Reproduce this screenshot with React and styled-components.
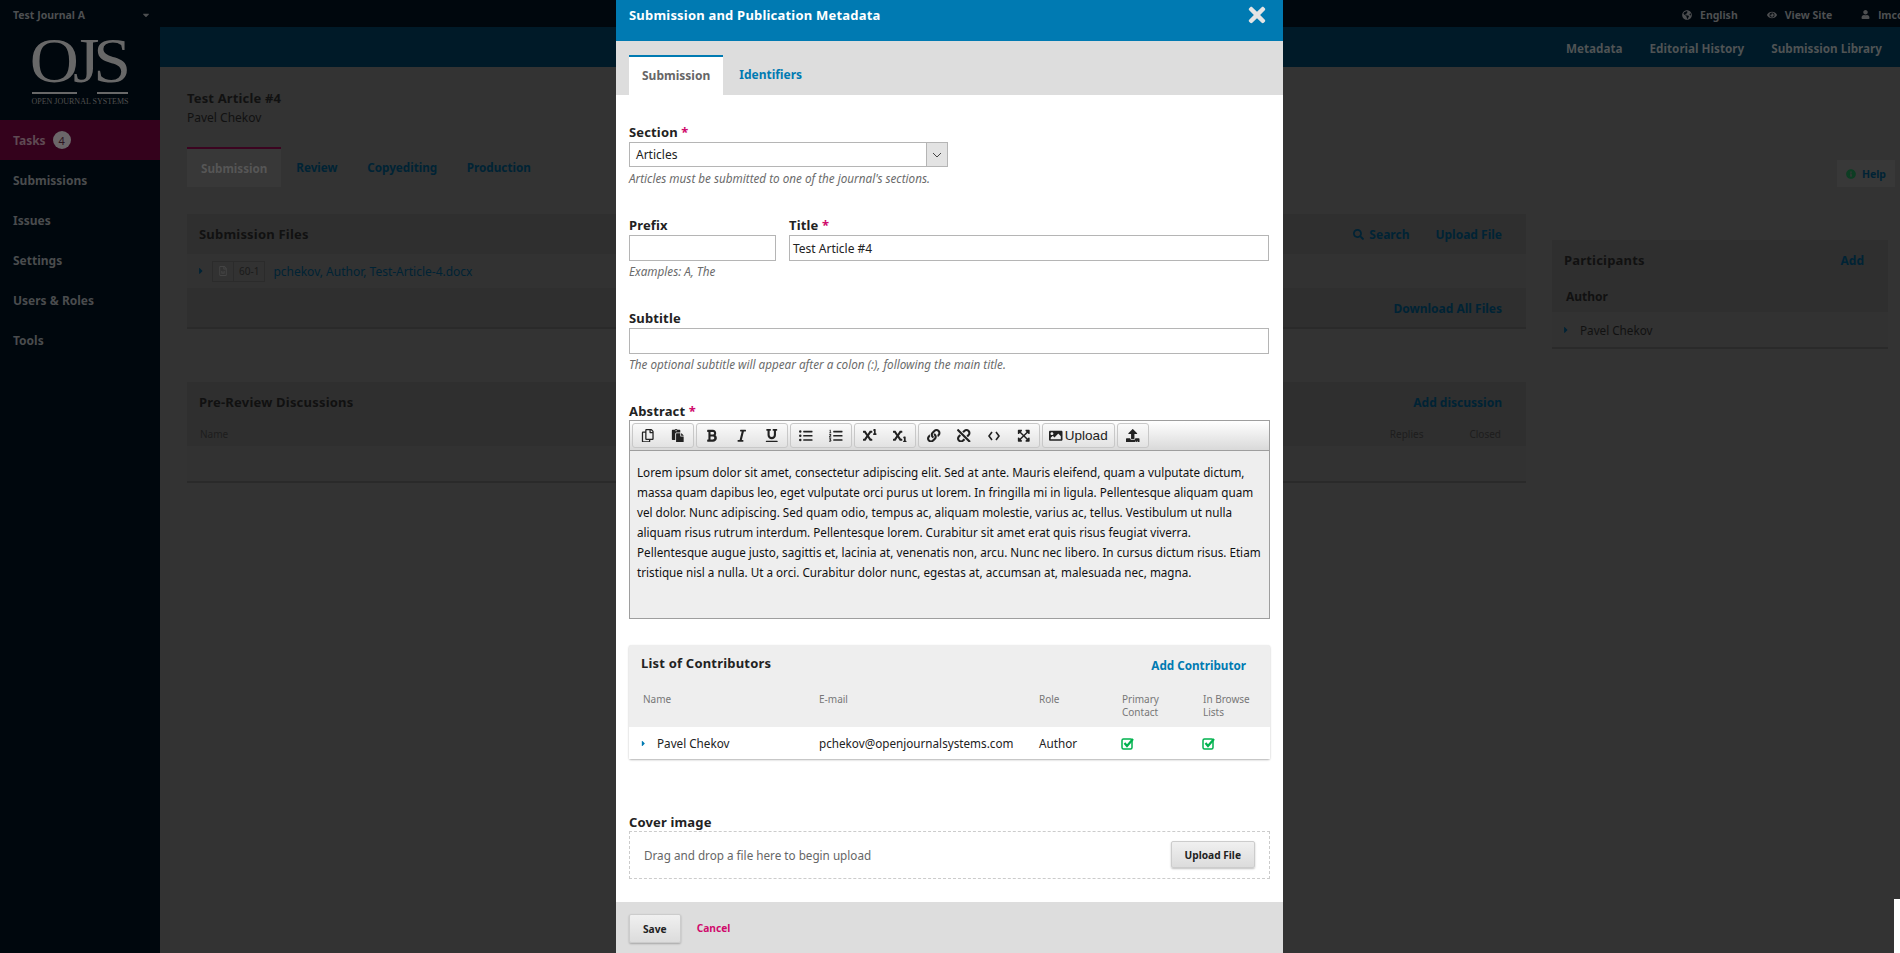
import React from 'react';
import styled, { createGlobalStyle } from 'styled-components';
import {
  FaBold, FaCaretDown, FaCaretRight, FaExpandArrowsAlt, FaEye, FaGlobeAmericas, FaImage, FaInfoCircle,
  FaItalic, FaLink, FaListOl, FaListUl, FaPaste, FaRegCopy, FaRegFileWord, FaSearch,
  FaSubscript, FaSuperscript, FaTimes, FaUnderline, FaUnlink, FaUpload, FaUser,
} from 'react-icons/fa';

const dimLink = '#002335';
const blue = '#007ab2';

const Global = createGlobalStyle`
  html, body { margin: 0; height: 100%; background: #333; overflow: hidden; }
  body { font-family: "Noto Sans", sans-serif; font-size: 13px; color: #111; }
  * { box-sizing: border-box; }
`;

const Screen = styled.div`
  position: relative;
  width: 1900px;
  height: 953px;
  overflow: hidden;
  background: #333;
`;

const TopBar = styled.div`
  height: 27px;
  background: #00070d;
  display: flex;
  align-items: center;
  justify-content: space-between;
  padding: 2px 0 0 13px;
  color: #4d4f51;
  font-size: 10.5px;
  font-weight: 700;
`;

const JournalName = styled.div`
  width: 138px;
  display: flex;
  align-items: center;
  justify-content: space-between;
`;

const TopLinks = styled.div`
  display: flex;
  gap: 29px;
  width: 218px;
  white-space: nowrap;
  overflow: hidden;
`;

const TopLink = styled.span`
  display: flex;
  align-items: center;
  gap: 8px;
`;

const Body = styled.div`
  display: flex;
  height: 926px;
`;

const Sidebar = styled.nav`
  width: 160px;
  flex: none;
  background: #00070d;
`;

const Logo = styled.div`
  height: 93px;
  display: flex;
  flex-direction: column;
  align-items: center;
  color: #686868;
  font-family: "Liberation Serif", serif;
  padding-top: 5px;
`;

const LogoMark = styled.div`
  font-size: 68px;
  line-height: 56px;
  letter-spacing: -6px;
  margin-left: -5px;
  transform: scaleY(.94);
`;

const LogoRule = styled.div`
  width: 96px;
  height: 2px;
  margin-top: 4px;
  background: linear-gradient(90deg, #686868 47%, transparent 47%, transparent 68%, #686868 68%);
`;

const LogoCaption = styled.div`
  font-size: 8px;
  line-height: 12px;
  margin-top: 2px;
  white-space: nowrap;
  color: #505050;
`;

const NavItem = styled.div`
  height: 40px;
  padding-left: 13px;
  display: flex;
  align-items: center;
  gap: 7px;
  font-size: 12px;
  font-weight: 700;
  color: ${p => (p.$active ? '#5f4a53' : '#4a4c4e')};
  background: ${p => (p.$active ? '#34021c' : 'transparent')};
`;

const Count = styled.span`
  width: 18px;
  height: 18px;
  border-radius: 50%;
  background: #6b6669;
  color: #2c1520;
  display: flex;
  align-items: center;
  justify-content: center;
  font-size: 11px;
  font-weight: 400;
`;

const Main = styled.div`
  flex: 1;
  min-width: 0;
`;

const ContextBar = styled.div`
  height: 40px;
  padding: 1px 18px 0 0;
  background: #001a28;
  display: flex;
  align-items: center;
  justify-content: flex-end;
  gap: 27px;
  color: #4f5354;
  font-size: 11.7px;
  font-weight: 700;
`;

const Heading = styled.div`
  padding: 21px 0 0 27px;
  line-height: 20px;
`;

const ArticleTitle = styled.div`
  font-weight: 700;
  color: #111;
  letter-spacing: .15px;
`;

const ArticleAuthor = styled.div`
  font-size: 12px;
  color: #111;
`;

const TabRow = styled.div`
  margin-top: 19px;
  height: 40px;
  padding: 0 5px 0 27px;
  display: flex;
  align-items: stretch;
  justify-content: space-between;
`;

const TabList = styled.div`
  display: flex;
`;

const PageTab = styled.div`
  padding: 0 14.8px;
  display: flex;
  align-items: center;
  font-size: 11.7px;
  font-weight: 700;
  color: ${p => (p.$active ? '#565656' : dimLink)};
  ${p => p.$active && `
    background: #383838;
    border-top: 2px solid #3b0420;
    padding: 0 14px;
  `}
`;

const HelpTab = styled.div`
  align-self: flex-end;
  height: 27px;
  padding: 0 9px;
  background: #383838;
  display: flex;
  align-items: center;
  gap: 6px;
  color: ${dimLink};
  font-size: 10.5px;
  font-weight: 700;
  svg { color: #0d3d23; }
`;

const Columns = styled.div`
  display: flex;
  gap: 26px;
  padding-left: 27px;
`;

const LeftColumn = styled.div`
  width: 1339px;
  padding-top: 27px;
  display: flex;
  flex-direction: column;
  gap: 53px;
`;

const RightColumn = styled.div`
  width: 336px;
  padding-top: 53px;
`;

const Panel = styled.section`
  background: #2f2f2f;
  border-bottom: 2px solid #2a2a2a;
`;

const PanelHead = styled.div`
  display: flex;
  align-items: center;
  justify-content: space-between;
  padding: 0 24px 0 12px;
  height: 40px;
`;

const PanelTitle = styled.h3`
  margin: 0;
  font-size: 13px;
  font-weight: 700;
  color: #111;
  letter-spacing: .2px;
`;

const PanelActions = styled.div`
  display: flex;
  gap: 26px;
`;

const DimLink = styled.span`
  display: flex;
  align-items: center;
  gap: 5px;
  color: ${dimLink};
  font-weight: 700;
  font-size: 12px;
`;

const FileRow = styled.div`
  height: 34px;
  padding-left: 9px;
  background: #323232;
  display: flex;
  align-items: center;
  gap: 6px;
  color: ${dimLink};
  font-size: 12px;
`;

const FileBadge = styled.div`
  display: flex;
  align-items: stretch;
  height: 21px;
  margin-right: 2px;
  border: 1px solid #2b2b2b;
  font-size: 10px;
  span {
    display: flex;
    align-items: center;
    padding: 0 5px;
    color: #444;
  }
  span + span { border-left: 1px solid #2b2b2b; color: #1a1a1a; }
`;

const PanelFoot = styled.div`
  height: 37px;
  margin-top: 2px;
  display: flex;
  align-items: center;
  justify-content: flex-end;
  padding-right: 24px;
`;

const ColumnHeads = styled.div`
  height: 24px;
  display: flex;
  align-items: center;
  justify-content: space-between;
  padding: 0 25px 0 13px;
  color: #1d1d1d;
  font-size: 10px;
  div { display: flex; gap: 46px; }
`;

const EmptyRow = styled.div`
  height: 35px;
  background: #323232;
`;

const RoleHead = styled.div`
  height: 32px;
  padding: 1px 0 0 14px;
  display: flex;
  align-items: center;
  font-size: 12px;
  font-weight: 700;
  color: #111;
`;

const PersonRow = styled.div`
  height: 35px;
  padding-left: 9px;
  background: #323232;
  display: flex;
  align-items: center;
  gap: 9px;
  font-size: 11.7px;
  color: #111;
  svg { color: ${dimLink}; }
`;

const Modal = styled.div`
  position: absolute;
  top: 0;
  left: 616px;
  width: 667px;
  height: 953px;
  background: #fff;
  display: flex;
  flex-direction: column;
  overflow: hidden;
`;

const ModalHead = styled.header`
  flex: none;
  height: 41px;
  padding: 0 13px 11px;
  background: ${blue};
  color: #fff;
  display: flex;
  align-items: center;
  justify-content: space-between;
  font-size: 13px;
  font-weight: 700;
  letter-spacing: .2px;
  svg { color: #e4e4e4; margin-right: 1px; }
`;

const ModalTabs = styled.div`
  flex: none;
  height: 54px;
  background: #ddd;
  padding: 14px 13px 0;
  display: flex;
`;

const ModalTab = styled.div`
  padding: 0 ${p => (p.$active ? 13 : 16)}px 2px;
  display: flex;
  align-items: center;
  font-size: 12px;
  font-weight: 700;
  color: ${p => (p.$active ? '#666' : blue)};
  ${p => p.$active && `background: #fff; border-top: 2px solid ${blue};`}
`;

const Form = styled.div`
  flex: 1;
  min-height: 0;
  padding: 27px 13px 0;
`;

const Field = styled.div`
  margin-bottom: ${p => p.$gap ?? 27}px;
`;

const SplitFields = styled.div`
  display: grid;
  grid-template-columns: 147px 1fr;
  gap: 13px;
  margin-bottom: 27px;
`;

const Label = styled.div`
  height: 20px;
  line-height: 20px;
  font-size: 13px;
  font-weight: 700;
  color: #222;
  letter-spacing: .15px;
`;

const Star = styled.span`
  color: #d00a6c;
`;

const Input = styled.div`
  height: 26px;
  margin-right: ${p => (p.$inset ? 1 : 0)}px;
  border: 1px solid #b5b5b5;
  padding: 0 3px;
  display: flex;
  align-items: center;
  font-size: 12px;
  color: #222;
`;

const Select = styled.div`
  width: 319px;
  height: 25px;
  margin-bottom: 1px;
  border: 1px solid #b5b5b5;
  display: flex;
  align-items: center;
  justify-content: space-between;
  padding-left: 6px;
  font-size: 12px;
  color: #222;
`;

const SelectArrow = styled.div`
  width: 21px;
  height: 23px;
  background: #e3e3e3;
  border-left: 1px solid #b5b5b5;
  display: flex;
  align-items: center;
  justify-content: center;
`;

const Hint = styled.div`
  height: 20px;
  line-height: 20px;
  font-size: 11.7px;
  font-style: italic;
  color: #6b6b6b;
`;

const Editor = styled.div`
  margin-top: -1px;
  border: 1px solid #9e9e9e;
  height: 199px;
  display: flex;
  flex-direction: column;
`;

const Toolbar = styled.div`
  flex: none;
  height: 30px;
  padding: 2px 0 0 2px;
  display: flex;
  gap: 2px;
  background: linear-gradient(#fff, #d9d9d9);
  border-bottom: 1px solid #9e9e9e;
`;

const ToolGroup = styled.div`
  height: 25px;
  display: flex;
  border: 1px solid #c8c8c8;
  border-radius: 3px;
  background: linear-gradient(#fafafa, #e2e2e2);
`;

const ToolButton = styled.div`
  width: ${p => (p.$wide ? 71 : 30)}px;
  display: flex;
  align-items: center;
  justify-content: center;
  gap: 2px;
  font-family: "Liberation Sans", sans-serif;
  font-size: 13.5px;
  color: #222;
`;

const EditorText = styled.div`
  flex: 1;
  background: #eee;
  padding: 11px 7px 0;
  font-size: 11.7px;
  line-height: 20px;
  color: #111;
`;

const Contributors = styled.section`
  margin: 26px 0 53px;
  border-radius: 2px;
  box-shadow: 0 1px 2px rgba(0, 0, 0, .3);
  background: #eee;
`;

const ContributorsHead = styled.div`
  height: 42px;
  padding: 0 24px 2px 12px;
  display: flex;
  align-items: center;
  justify-content: space-between;
`;

const ContributorsTitle = styled.h3`
  margin: 0 0 4px;
  font-size: 13px;
  font-weight: 700;
  color: #222;
  letter-spacing: .2px;
`;

const AddLink = styled.span`
  font-size: 11.7px;
  font-weight: 700;
  color: ${blue};
`;

const ContribColumns = styled.div`
  display: grid;
  grid-template-columns: 176px 220px 83px 81px 1fr;
  height: 40px;
  padding: 6px 0 0 14px;
  font-size: 10px;
  line-height: 13px;
  color: #777;
`;

const ContribRow = styled.div`
  display: grid;
  grid-template-columns: 180px 220px 82px 81px 1fr;
  align-items: center;
  height: 32px;
  padding-left: 10px;
  background: #fff;
  font-size: 11.7px;
  color: #222;
`;

const ContribName = styled.div`
  display: flex;
  align-items: center;
  gap: 9px;
  svg { color: ${blue}; }
`;

const CheckMark = () => (
  <svg width="14" height="13" viewBox="0 0 14 13" fill="none">
    <rect x="1" y="2" width="10" height="10" rx="1.5" stroke="#00b24e" strokeWidth="1.5" />
    <path d="M3.5 6l2.5 3L12 2" stroke="#00b24e" strokeWidth="2.2" />
  </svg>
);

const CheckCell = styled.div`
  display: flex;
`;

const DropZone = styled.div`
  height: 48px;
  margin-top: -1px;
  border: 1px dashed #ccc;
  display: flex;
  align-items: center;
  justify-content: space-between;
  padding: 0 14px 1px 14px;
  font-size: 11.7px;
  color: #666;
`;

const Button = styled.div`
  height: ${p => p.$h}px;
  padding: 0 ${p => p.$pad}px;
  display: flex;
  align-items: center;
  border: 1px solid #ccc;
  border-radius: 2px;
  background: linear-gradient(#f0f0f0, #dcdcdc);
  box-shadow: 0 1px 2px rgba(0, 0, 0, .25);
  font-size: 10.2px;
  font-weight: 700;
  color: #222;
`;

const ModalFoot = styled.footer`
  flex: none;
  height: 51px;
  padding: 12px 13px 0;
  background: #ddd;
  display: flex;
  align-items: flex-start;
  gap: 16px;
`;

const CancelLink = styled.span`
  line-height: 29px;
  font-size: 10.2px;
  font-weight: 700;
  color: #d00a6c;
`;

const CornerGap = styled.div`
  position: absolute;
  right: 0;
  top: 899px;
  width: 6px;
  height: 54px;
  background: #fff;
`;

const toolGroups = [
  [<FaRegCopy />, <FaPaste />],
  [<FaBold />, <FaItalic />, <FaUnderline />],
  [<FaListUl />, <FaListOl />],
  [<FaSuperscript />, <FaSubscript />],
  [
    <FaLink />,
    <FaUnlink />,
    <svg width="12" height="10" viewBox="0 0 12 10" fill="none" stroke="#222" strokeWidth="1.6">
      <path d="M4 1 1 5l3 4M8 1l3 4-3 4" />
    </svg>,
    <FaExpandArrowsAlt />,
  ],
];

const abstract = 'Lorem ipsum dolor sit amet, consectetur adipiscing elit. Sed at ante. Mauris eleifend, quam a vulputate dictum, massa quam dapibus leo, eget vulputate orci purus ut lorem. In fringilla mi in ligula. Pellentesque aliquam quam vel dolor. Nunc adipiscing. Sed quam odio, tempus ac, aliquam molestie, varius ac, tellus. Vestibulum ut nulla aliquam risus rutrum interdum. Pellentesque lorem. Curabitur sit amet erat quis risus feugiat viverra. Pellentesque augue justo, sagittis et, lacinia at, venenatis non, arcu. Nunc nec libero. In cursus dictum risus. Etiam tristique nisl a nulla. Ut a orci. Curabitur dolor nunc, egestas at, accumsan at, malesuada nec, magna.';

const App = () => (
  <Screen>
    <Global />
    <TopBar>
      <JournalName>Test Journal A <FaCaretDown size={10} /></JournalName>
      <TopLinks>
        <TopLink><FaGlobeAmericas size={10} /> English</TopLink>
        <TopLink><FaEye size={10} /> View Site</TopLink>
        <TopLink><FaUser size={9} /> lmccoy</TopLink>
      </TopLinks>
    </TopBar>
    <Body>
      <Sidebar>
        <Logo>
          <LogoMark>OJS</LogoMark>
          <LogoRule />
          <LogoCaption>OPEN JOURNAL SYSTEMS</LogoCaption>
        </Logo>
        <NavItem $active>Tasks <Count>4</Count></NavItem>
        <NavItem>Submissions</NavItem>
        <NavItem>Issues</NavItem>
        <NavItem>Settings</NavItem>
        <NavItem>Users &amp; Roles</NavItem>
        <NavItem>Tools</NavItem>
      </Sidebar>
      <Main>
        <ContextBar>
          <span>Metadata</span>
          <span>Editorial History</span>
          <span>Submission Library</span>
        </ContextBar>
        <Heading>
          <ArticleTitle>Test Article #4</ArticleTitle>
          <ArticleAuthor>Pavel Chekov</ArticleAuthor>
        </Heading>
        <TabRow>
          <TabList>
            <PageTab $active>Submission</PageTab>
            <PageTab>Review</PageTab>
            <PageTab>Copyediting</PageTab>
            <PageTab>Production</PageTab>
          </TabList>
          <HelpTab><FaInfoCircle size={10} /> Help</HelpTab>
        </TabRow>
        <Columns>
          <LeftColumn>
            <Panel>
              <PanelHead>
                <PanelTitle>Submission Files</PanelTitle>
                <PanelActions>
                  <DimLink><FaSearch size={11} /> Search</DimLink>
                  <DimLink>Upload File</DimLink>
                </PanelActions>
              </PanelHead>
              <FileRow>
                <FaCaretRight size={10} />
                <FileBadge>
                  <span><FaRegFileWord size={10} /></span>
                  <span>60-1</span>
                </FileBadge>
                pchekov, Author, Test-Article-4.docx
              </FileRow>
              <PanelFoot><DimLink>Download All Files</DimLink></PanelFoot>
            </Panel>
            <Panel>
              <PanelHead>
                <PanelTitle>Pre-Review Discussions</PanelTitle>
                <DimLink>Add discussion</DimLink>
              </PanelHead>
              <ColumnHeads>
                <span>Name</span>
                <div><span>Replies</span><span>Closed</span></div>
              </ColumnHeads>
              <EmptyRow />
            </Panel>
          </LeftColumn>
          <RightColumn>
            <Panel>
              <PanelHead>
                <PanelTitle>Participants</PanelTitle>
                <DimLink>Add</DimLink>
              </PanelHead>
              <RoleHead>Author</RoleHead>
              <PersonRow><FaCaretRight size={10} /> Pavel Chekov</PersonRow>
            </Panel>
          </RightColumn>
        </Columns>
      </Main>
    </Body>

    <Modal>
      <ModalHead>
        Submission and Publication Metadata
        <FaTimes size={24} />
      </ModalHead>
      <ModalTabs>
        <ModalTab $active>Submission</ModalTab>
        <ModalTab>Identifiers</ModalTab>
      </ModalTabs>
      <Form>
        <Field>
          <Label>Section <Star>*</Star></Label>
          <Select>
            Articles
            <SelectArrow>
              <svg width="10" height="6" viewBox="0 0 10 6" fill="none" stroke="#444">
                <path d="M1 1l4 4 4-4" />
              </svg>
            </SelectArrow>
          </Select>
          <Hint>Articles must be submitted to one of the journal's sections.</Hint>
        </Field>
        <SplitFields>
          <div>
            <Label>Prefix</Label>
            <Input />
            <Hint>Examples: A, The</Hint>
          </div>
          <div>
            <Label>Title <Star>*</Star></Label>
            <Input $inset>Test Article #4</Input>
          </div>
        </SplitFields>
        <Field>
          <Label>Subtitle</Label>
          <Input $inset />
          <Hint>The optional subtitle will appear after a colon (:), following the main title.</Hint>
        </Field>
        <Field $gap={0}>
          <Label>Abstract <Star>*</Star></Label>
          <Editor>
            <Toolbar>
              {toolGroups.map((group, i) => (
                <ToolGroup key={i}>
                  {group.map((icon, j) => <ToolButton key={j}>{icon}</ToolButton>)}
                </ToolGroup>
              ))}
              <ToolGroup>
                <ToolButton $wide><FaImage /> Upload</ToolButton>
              </ToolGroup>
              <ToolGroup>
                <ToolButton><FaUpload /></ToolButton>
              </ToolGroup>
            </Toolbar>
            <EditorText>{abstract}</EditorText>
          </Editor>
        </Field>
        <Contributors>
          <ContributorsHead>
            <ContributorsTitle>List of Contributors</ContributorsTitle>
            <AddLink>Add Contributor</AddLink>
          </ContributorsHead>
          <ContribColumns>
            <span>Name</span>
            <span>E-mail</span>
            <span>Role</span>
            <span>Primary<br />Contact</span>
            <span>In Browse<br />Lists</span>
          </ContribColumns>
          <ContribRow>
            <ContribName><FaCaretRight size={9} /> Pavel Chekov</ContribName>
            <span>pchekov@openjournalsystems.com</span>
            <span>Author</span>
            <CheckCell><CheckMark /></CheckCell>
            <CheckCell><CheckMark /></CheckCell>
          </ContribRow>
        </Contributors>
        <Field $gap={0}>
          <Label>Cover image</Label>
          <DropZone>
            Drag and drop a file here to begin upload
            <Button $h={27} $pad={13}>Upload File</Button>
          </DropZone>
        </Field>
      </Form>
      <ModalFoot>
        <Button $h={29} $pad={13}>Save</Button>
        <CancelLink>Cancel</CancelLink>
      </ModalFoot>
    </Modal>
    <CornerGap />
  </Screen>
);

export default App;
